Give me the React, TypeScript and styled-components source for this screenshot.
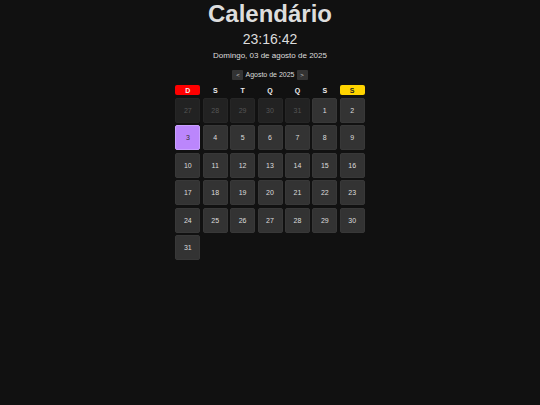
import React from "react";
import styled, { createGlobalStyle } from "styled-components";

const GlobalStyle = createGlobalStyle`
  body {
    margin: 0;
    background: #111;
    color: #ddd;
    font-family: "Liberation Sans", Arial, sans-serif;
  }
`;

const Page = styled.div`
  min-height: 405px;
  display: flex;
  flex-direction: column;
  align-items: center;
`;

const Title = styled.h1`
  margin: 0;
  font-size: 24px;
  line-height: 28px;
  font-weight: 700;
  color: #ddd;
`;

const Clock = styled.div`
  margin-top: 3px;
  font-size: 14px;
  line-height: 16px;
  color: #ddd;
`;

const DateLine = styled.div`
  margin-top: 4px;
  font-size: 8px;
  line-height: 10px;
  color: #ddd;
`;

const Nav = styled.div`
  margin-top: 8px;
  display: flex;
  align-items: center;
  gap: 2px;
  height: 11px;
`;

const NavButton = styled.button`
  width: 11px;
  height: 10px;
  padding: 0;
  border: 0;
  border-radius: 1px;
  background: #333;
  color: #ccc;
  font-family: inherit;
  font-size: 6px;
  line-height: 10px;
`;

const MonthLabel = styled.span`
  font-size: 7px;
  color: #ddd;
`;

const Grid = styled.div<{ $top: number }>`
  margin-top: ${p => p.$top}px;
  display: grid;
  grid-template-columns: repeat(7, 25px);
  column-gap: 2.4px;
  row-gap: 2.4px;
`;

const WeekDay = styled.div<{ $tone?: "sun" | "sat" }>`
  height: 10px;
  border-radius: 2px;
  display: flex;
  align-items: center;
  justify-content: center;
  font-size: 7px;
  font-weight: 700;
  background: ${p => (p.$tone === "sun" ? "#ff0000" : p.$tone === "sat" ? "#ffd400" : "transparent")};
  color: ${p => (p.$tone === "sat" ? "#222" : "#eee")};
`;

const Day = styled.div<{ $kind: "other" | "normal" | "today" }>`
  height: 25px;
  border-radius: 2px;
  display: flex;
  align-items: center;
  justify-content: center;
  font-size: 7px;
  box-sizing: border-box;
  border: 1px solid ${p => (p.$kind === "today" ? "#c9a0ff" : p.$kind === "other" ? "#262626" : "#383838")};
  background: ${p => (p.$kind === "today" ? "#bb86fc" : p.$kind === "other" ? "#222" : "#333")};
  color: ${p => (p.$kind === "today" ? "#333" : p.$kind === "other" ? "#555" : "#ddd")};
`;

const weekDays = ["D", "S", "T", "Q", "Q", "S", "S"];

const App: React.FC = () => {
  const days: { n: number; kind: "other" | "normal" | "today" }[] = [];
  [27, 28, 29, 30, 31].forEach(n => days.push({ n, kind: "other" }));
  for (let n = 1; n <= 31; n++) days.push({ n, kind: n === 3 ? "today" : "normal" });

  return (
    <Page>
      <GlobalStyle />
      <Title>Calendário</Title>
      <Clock>23:16:42</Clock>
      <DateLine>Domingo, 03 de agosto de 2025</DateLine>
      <Nav>
        <NavButton>&lt;</NavButton>
        <MonthLabel>Agosto de 2025</MonthLabel>
        <NavButton>&gt;</NavButton>
      </Nav>
      <Grid $top={5}>
        {weekDays.map((d, i) => (
          <WeekDay key={i} $tone={i === 0 ? "sun" : i === 6 ? "sat" : undefined}>
            {d}
          </WeekDay>
        ))}
      </Grid>
      <Grid $top={3}>
        {days.map((d, i) => (
          <Day key={i} $kind={d.kind}>
            {d.n}
          </Day>
        ))}
      </Grid>
    </Page>
  );
};

export default App;
